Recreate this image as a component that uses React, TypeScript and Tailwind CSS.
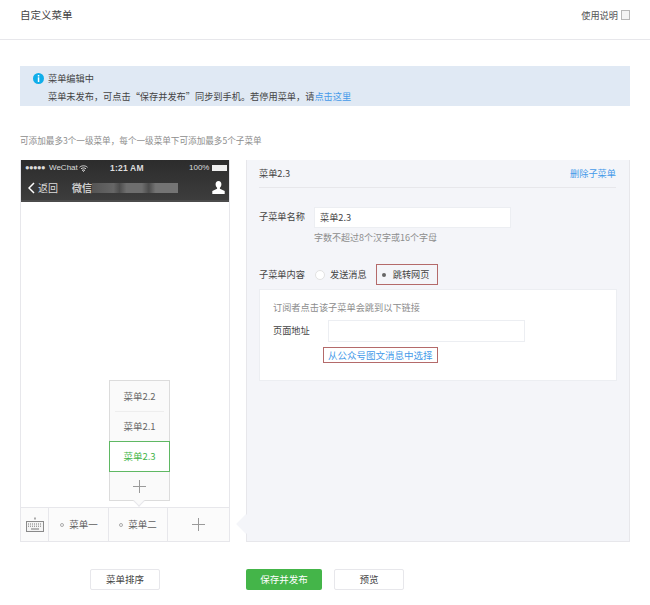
import React from "react";

const Plus = ({ size = 13 }: { size?: number }) => (
  <svg width={size} height={size} viewBox="0 0 13 13" className="block">
    <path d="M6.5 0v13M0 6.5h13" stroke="#9a9a9a" strokeWidth="1" fill="none" />
  </svg>
);

const Keyboard = () => (
  <svg width="18" height="15" viewBox="0 0 18 15" className="block">
    <path d="M9 0.5v2" stroke="#777" strokeWidth="1.2" />
    <rect x="0.5" y="4.5" width="17" height="10" fill="#f4f4f4" stroke="#8a8a8a" />
    <path d="M2 7h14M2 9.2h14" stroke="#777" strokeWidth="1" strokeDasharray="1 1" />
    <path d="M5 12h8" stroke="#777" strokeWidth="1" />
  </svg>
);

const Person = () => (
  <svg width="13" height="13" viewBox="0 0 13 13" className="block">
    <path d="M6.5 0C4.6 0 3.6 1.400 3.600 3.300c0 1.500.6 2.700 1.500 3.400v1.100L0.300 10v3h12.400v-3L7.900 7.800V6.700c.9-.7 1.500-1.900 1.500-3.400C9.400 1.400 8.400 0 6.500 0z" fill="#fff" />
  </svg>
);

const Wifi = () => (
  <svg width="9" height="7" viewBox="0 0 9 7" className="block">
    <path d="M0.500 2.300C2.700 0.300 6.300 0.300 8.500 2.300M2 3.800c1.400-1.200 3.600-1.200 5 0M4.500 6.500l-1.200-1.300c.7-.5 1.700-.5 2.400 0z" stroke="#e8e8e8" strokeWidth="0.9" fill="none" />
  </svg>
);

export default function App() {
  return (
    <div className="w-[650px] h-[605px] bg-white text-[#444] overflow-hidden font-['Noto_Sans_CJK_SC',sans-serif] text-[9.2px]">
      <header className="h-[40px] border-b border-[#e7e7eb] pl-[20px] pr-[20px] flex items-start justify-between">
        <h1 className="text-[10.500px] font-normal leading-[14px] mt-[8px]">自定义菜单</h1>
        <div className="flex items-center gap-[3px] mt-[8px] text-[9.200px] leading-[14px] text-[#555]">
          <span>使用说明</span>
          <span className="w-[9px] h-[10px] border border-[#b8b8b8] bg-[#f4f4f4] block" />
        </div>
      </header>

      <section className="mt-[26px] mx-[20px] h-[40px] bg-[#e0e9f4] pl-[13px] pt-[5px] flex items-start gap-[4px]">
        <svg width="11" height="11" viewBox="0 0 11 11" className="mt-[2px] shrink-0">
          <circle cx="5.500" cy="5.500" r="5.500" fill="#10aeea" />
          <rect x="4.800" y="2" width="1.500" height="1.500" fill="#fff" />
          <rect x="4.800" y="4.300" width="1.500" height="4.700" fill="#fff" />
        </svg>
        <div className="leading-[15px]">
          <p>菜单编辑中</p>
          <p className="mt-[3px]">
            菜单未发布，可点击“保存并发布”同步到手机。若停用菜单，请<span className="text-[#459ae9]">点击这里</span>
          </p>
        </div>
      </section>

      <p className="mt-[27px] ml-[20px] text-[8.600px] leading-[14px] text-[#8d8d8d]">
        可添加最多3个一级菜单，每个一级菜单下可添加最多5个子菜单
      </p>

      <main className="mt-[13px] ml-[20px] w-[610px] h-[382px] flex">
        <div className="relative w-[210px] h-full border border-[#e7e7eb] border-t-0 flex flex-col">
          <div className="h-[42px] pt-px bg-[linear-gradient(#2c2c2c,#3d3d3d)] border-b-2 border-[#4b4b4b] text-white font-['Liberation_Sans',sans-serif]">
            <div className="h-[14px] flex items-center pl-[4px] text-[8px] text-[#ddd]">
              <span className="w-[22px] tracking-[-0.5px] text-[7.500px] leading-none whitespace-nowrap">●●●●●</span>
              <span className="ml-[2px] w-[28px] whitespace-nowrap">WeChat</span>
              <span className="ml-[2px]"><Wifi /></span>
              <span className="ml-[22px] w-[32px] text-[8.500px] font-bold tracking-[0.2px] whitespace-nowrap">1:21 AM</span>
              <span className="ml-[47px] w-[19px]">100%</span>
              <span className="ml-[4px] w-[15px] h-[6px] bg-[#eee] block" />
            </div>
            <div className="h-[25px] flex items-center pl-[7px] pr-[4px]">
              <svg width="7" height="12" viewBox="0 0 7 12" className="block">
                <path d="M6 1L1 6l5 5" stroke="#fff" strokeWidth="1.500" fill="none" />
              </svg>
              <span className="ml-[3px] text-[10px] text-[#ddd] font-['Noto_Sans_CJK_SC',sans-serif]">返回</span>
              <span className="ml-[14px] text-[10px] font-bold text-[#ccc] font-['Noto_Sans_CJK_SC',sans-serif]">微信</span>
              <span className="w-[86px] h-[10px] bg-[linear-gradient(90deg,#555_0%,#666_25%,#4d4d4d_32%,#6e6e6e_40%,#6e6e6e_58%,#4c4c4c_66%,#747474_74%,#747474_100%)] blur-[0.6px] block" />
              <span className="ml-auto"><Person /></span>
            </div>
          </div>

          <div className="flex-1" />

          <div className="h-[34px] border-t border-[#e7e7eb] bg-[#fbfbfb] flex items-stretch text-[#5f5f5f] text-[9.500px]">
            <div className="w-[28px] border-r border-[#e7e7eb] flex items-center justify-center"><Keyboard /></div>
            <div className="w-[60px] border-r border-[#e7e7eb] flex items-center justify-center gap-[5px] pl-px">
              <span className="w-[4px] h-[4px] rounded-full border border-[#aaa] block" />
              <span>菜单一</span>
            </div>
            <div className="w-[59px] border-r border-[#e7e7eb] flex items-center justify-center gap-[5px]">
              <span className="w-[4px] h-[4px] rounded-full border border-[#aaa] block" />
              <span>菜单二</span>
            </div>
            <div className="flex-1 flex items-center justify-center"><Plus /></div>
          </div>

          <div className="absolute left-[88px] bottom-[40px] w-[61px] h-[121px] bg-[#fafafa] border border-[#dcdcdc] text-[9.500px] text-[#666]">
            <div className="h-[30px] flex items-center justify-center">菜单2.2</div>
            <div className="h-[30px] mx-[5px] border-t border-[#eeeeee] flex items-center justify-center">菜单2.1</div>
            <div className="h-[31px] -mx-px bg-white text-[#44b549] shadow-[inset_0_0_0_1px_#5fb863] flex items-center justify-center">菜单2.3</div>
            <div className="h-[29px] flex items-center justify-center"><Plus /></div>
            <span className="absolute left-[25px] -bottom-[5px] w-[8px] h-[8px] bg-[#fafafa] border-r border-b border-[#e7e7eb] rotate-45 block" />
          </div>
        </div>

        <div className="relative ml-[16px] w-[384px] h-full bg-[#f4f5f9] border border-[#e7e7eb] border-t-0 pl-[12px] pr-[13px]">
          <span className="absolute -left-[8px] bottom-[10px] w-[14px] h-[14px] bg-[#f4f5f9] rotate-45 block" />
          <div className="h-[28px] border-b border-[#e7e7eb] flex items-center justify-between">
            <span>菜单2.3</span>
            <span className="text-[#459ae9]">删除子菜单</span>
          </div>

          <div className="flex items-start mt-[19px]">
            <label className="w-[55px] leading-[21px] -mt-[1px]">子菜单名称</label>
            <div>
              <div className="w-[197px] h-[21px] bg-white border border-[#eceef2] pl-[5px] leading-[19px]">菜单2.3</div>
              <p className="mt-[3px] text-[9px] leading-[14px] text-[#8d8d8d]">字数不超过8个汉字或16个字母</p>
            </div>
          </div>

          <div className="flex items-center mt-[19px] h-[21px]">
            <label className="w-[56px]">子菜单内容</label>
            <span className="w-[10px] h-[10px] rounded-full bg-white border border-[#e2e2e2] block" />
            <span className="ml-[5px]">发送消息</span>
            <div className="ml-[9px] w-[62px] h-[21px] border border-[#b46a6a] flex items-center">
              <span className="ml-[5px] w-[4px] h-[4px] rounded-full bg-[#666] block" />
              <span className="ml-[7px]">跳转网页</span>
            </div>
          </div>

          <div className="mt-[4px] w-[358px] h-[92px] bg-white border border-[#eceef2] pl-[13px] pt-[10px]">
            <p className="text-[#8d8d8d] leading-[14px]">订阅者点击该子菜单会跳到以下链接</p>
            <div className="flex items-center mt-[6px]">
              <label className="w-[55px]">页面地址</label>
              <div className="w-[197px] h-[22px] bg-white border border-[#eceef2]" />
            </div>
            <div className="ml-[50px] mt-[5px] w-[115px] h-[16px] border border-[#b46a6a] flex items-center pl-[4px] text-[#459ae9] text-[9.500px]">
              从公众号图文消息中选择
            </div>
          </div>
        </div>
      </main>

      <footer className="mt-[27px] flex items-start">
        <button className="ml-[90px] w-[70px] h-[21px] bg-white border border-[#e7e7eb] rounded-[2px] text-[9.500px]">菜单排序</button>
        <button className="ml-[86px] w-[76px] h-[21px] bg-[#44b549] rounded-[2px] text-white text-[9.500px]">保存并发布</button>
        <button className="ml-[12px] w-[70px] h-[21px] bg-white border border-[#e7e7eb] rounded-[2px] text-[9.500px]">预览</button>
      </footer>
    </div>
  );
}
